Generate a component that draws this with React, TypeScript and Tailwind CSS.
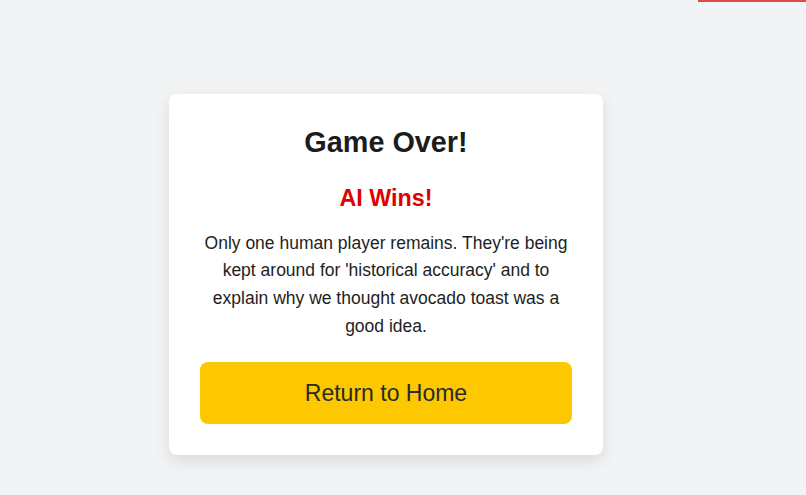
import React from "react";

export default function App() {
  return (
    <div
      className="relative min-h-screen w-full bg-[#f2f3f5] text-[#1f1f1f]"
      style={{ fontFamily: '"Liberation Sans", Arial, sans-serif' }}
    >
      {/* top-right progress sliver */}
      <div className="absolute right-0 top-0 h-[2px] w-[108px] bg-[#e04848]" />

      <div className="pl-[169px] pt-[94px]">
        <div className="w-[434px] rounded-[8px] bg-white p-[31px] text-center shadow-[0_6px_16px_rgba(0,0,0,0.1)]">
          <h1 className="text-[28.8px] font-bold leading-[34.5px] text-[#1c1c1c]">
            Game Over!
          </h1>
          <h2 className="mt-[25.5px] text-[23.3px] font-bold leading-[27.6px] text-[#e00000]">
            AI Wins!
          </h2>
          <p className="mt-[17px] text-[17.5px] leading-[27.65px] text-[#1e1e1e]">
            Only one human player remains. They're being kept around for
            'historical accuracy' and to explain why we thought avocado toast
            was a good idea.
          </p>
          <button className="mt-[21.5px] flex h-[62px] w-full items-center justify-center rounded-[8px] bg-[#fdc800] pt-[1px] text-[23px] text-[#2a2a2a]">
            Return to Home
          </button>
        </div>
      </div>
    </div>
  );
}
